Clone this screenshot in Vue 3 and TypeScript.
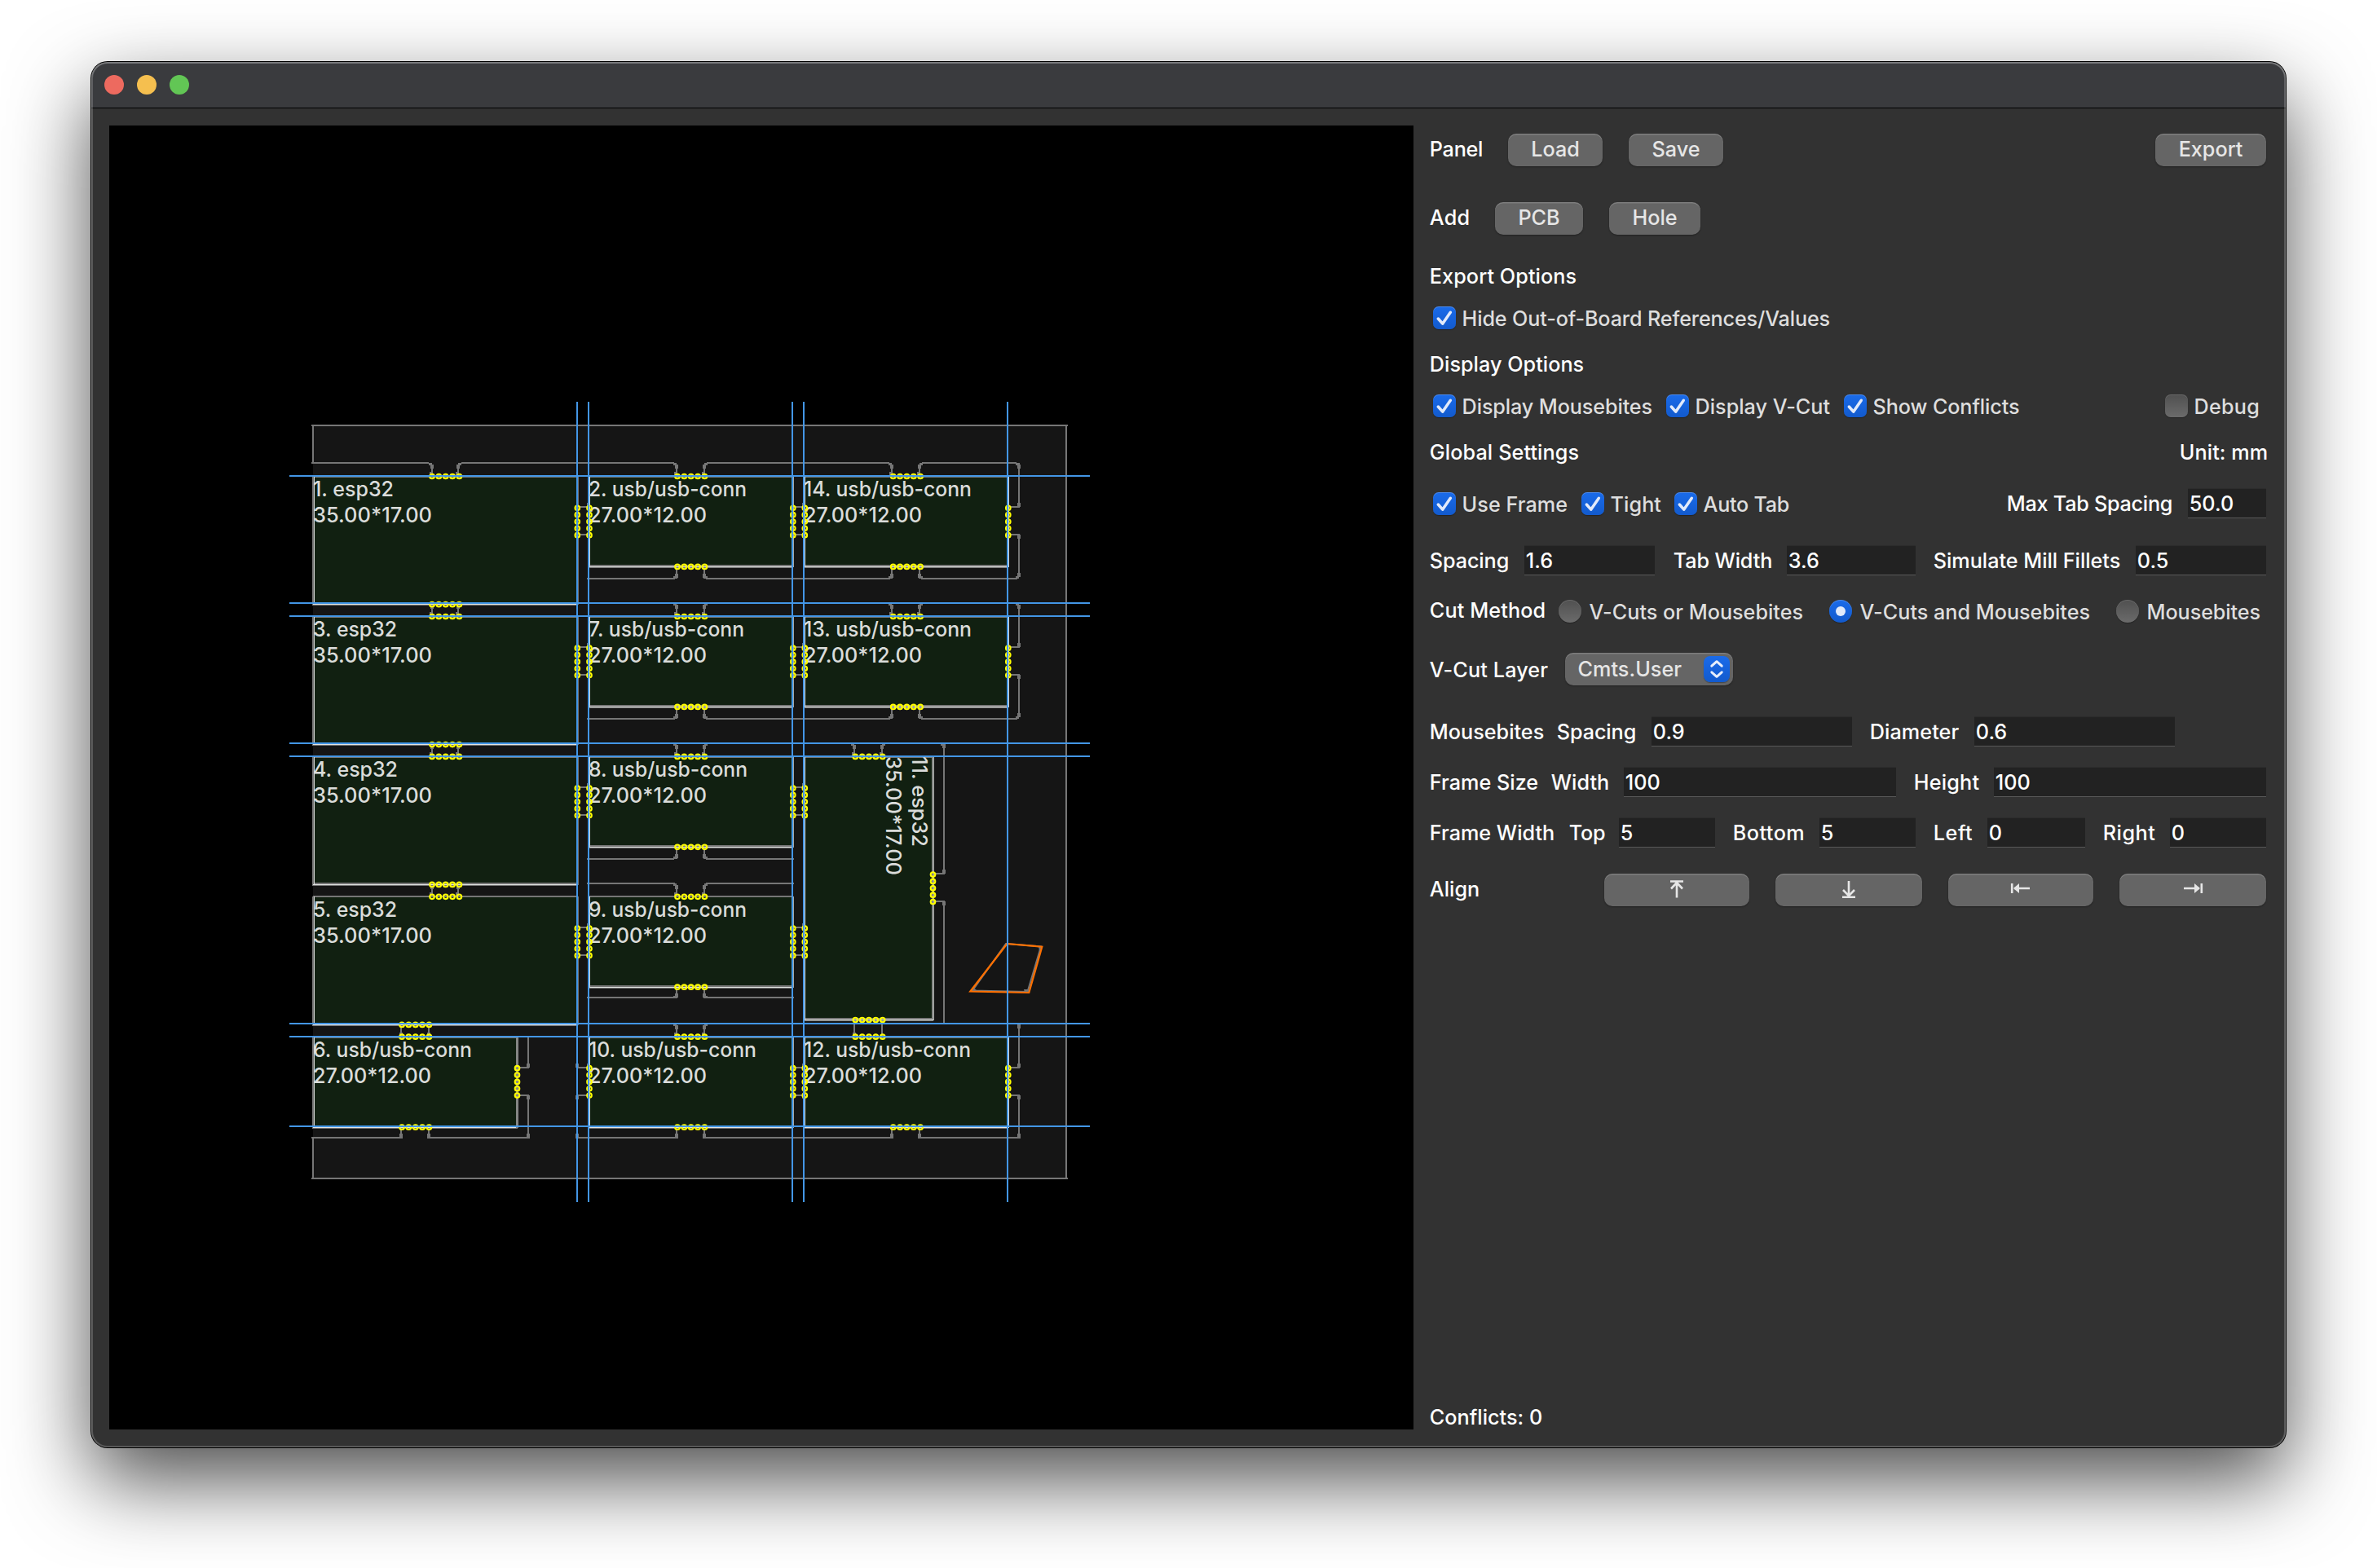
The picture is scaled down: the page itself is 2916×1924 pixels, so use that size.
<script setup lang="ts">
type Kind = 'label' | 'check' | 'radio' | 'field' | 'button' | 'select' | 'icon'

interface Item {
  kind: Kind
  x: number
  w: number
  text?: string
  on?: boolean
  icon?: 'top' | 'bottom' | 'left' | 'right'
}

interface Row {
  center: number
  cls?: string
  items: Item[]
}

const FONT = 25.2
const PANEL_X = 1734
const PANEL_Y = 154

const ctx = document.createElement('canvas').getContext('2d')!

// Letter spacing that makes a string occupy the wanted width.
function tracking(text: string, width: number, size = FONT): string {
  ctx.font = `450 ${size}px Inter`
  const natural = ctx.measureText(text).width
  return ((width + 1.4 - natural) / text.length).toFixed(3) + 'px'
}

const label = (text: string, x: number, w: number): Item => ({ kind: 'label', text, x, w })
const check = (text: string, x: number, w: number, on = true): Item => ({ kind: 'check', text, x, w, on })
const radio = (text: string, x: number, w: number, on = false): Item => ({ kind: 'radio', text, x, w, on })
const field = (text: string, x: number, w: number): Item => ({ kind: 'field', text, x, w })
const button = (text: string, x: number, w: number): Item => ({ kind: 'button', text, x, w })
const icon = (name: Item['icon'], x: number, w: number): Item => ({ kind: 'icon', icon: name, x, w })

const rows: Row[] = [
  { center: 184, cls: 'plain', items: [label('Panel', 1753, 64), button('Load', 1850, 116), button('Save', 1998, 116), button('Export', 2644, 136)] },
  { center: 268, cls: 'plain', items: [label('Add', 1753, 48), button('PCB', 1834, 108), button('Hole', 1974, 112)] },
  { center: 340, cls: 'plain', items: [label('Export Options', 1753, 179)] },
  { center: 390, items: [check('Hide Out-of-Board References/Values', 1758, 450)] },
  { center: 448, cls: 'plain', items: [label('Display Options', 1753, 188)] },
  { center: 498, items: [check('Display Mousebites', 1758, 232), check('Display V-Cut', 2044, 164), check('Show Conflicts', 2262, 178.5), check('Debug', 2656, 79, false)] },
  { center: 556, cls: 'plain', items: [label('Global Settings', 1753, 182), label('Unit: mm', 2673, 107)] },
  { center: 618, items: [check('Use Frame', 1758, 128), check('Tight', 1940, 61), check('Auto Tab', 2054, 104), label('Max Tab Spacing', 2461, 202), field('50.0', 2684, 96)] },
  { center: 688, items: [label('Spacing', 1753, 96), field('1.6', 1870, 160), label('Tab Width', 2052, 120), field('3.6', 2192, 158), label('Simulate Mill Fillets', 2371, 228), field('0.5', 2620, 160)] },
  { center: 750, cls: 'cut', items: [label('Cut Method', 1753, 141), radio('V-Cuts or Mousebites', 1912, 261), radio('V-Cuts and Mousebites', 2244, 281, true), radio('Mousebites', 2596, 138)] },
  { center: 821, cls: 'layer', items: [label('V-Cut Layer', 1753, 144), { kind: 'select', text: 'Cmts.User', x: 1920, w: 206 }] },
  { center: 898, items: [label('Mousebites', 1753, 139), label('Spacing', 1909, 96), field('0.9', 2026, 246), label('Diameter', 2293, 108), field('0.6', 2422, 246)] },
  { center: 960, items: [label('Frame Size', 1753, 132), label('Width', 1902, 70), field('100', 1992, 334), label('Height', 2347, 79), field('100', 2446, 334)] },
  { center: 1022, items: [label('Frame Width', 1753, 152), label('Top', 1924, 43), field('5', 1986, 118), label('Bottom', 2125, 87), field('5', 2232, 118), label('Left', 2371, 47), field('0', 2438, 120), label('Right', 2579, 63), field('0', 2662, 118)] },
  { center: 1092, cls: 'plain', items: [label('Align', 1753, 60), icon('top', 1968, 178), icon('bottom', 2178, 180), icon('left', 2390, 178), icon('right', 2600, 180)] },
  { center: 1740, cls: 'plain', items: [label('Conflicts: 0', 1753, 137)] },
]

// Full width an item occupies, controls with captions included.
function extent(it: Item): number {
  if (it.kind === 'label') return it.w + 3
  if (it.kind === 'check') return it.w + 38
  if (it.kind === 'radio') return it.w + 40
  return it.w
}

function rowGap(i: number): string {
  const top = rows[i].center - 20
  const prev = i ? rows[i - 1].center + 20 : PANEL_Y
  return top - prev + 'px'
}

function itemGap(row: Row, i: number): string {
  const prev = i ? row.items[i - 1].x + extent(row.items[i - 1]) : PANEL_X
  return row.items[i].x - prev + 'px'
}

const icons: Record<string, string> = {
  top: 'M-8-10.5H8M0-9V9.5M-7-1.5L0-9L7-1.5',
  bottom: 'M-8 8.7H8M0-11V7.5M-7 0L0 7.2L7 0',
  left: 'M-10.8-8V4M-8-2H11',
  right: 'M10.8-8V4M8-2H-11',
}
const heads: Record<string, string> = {
  left: 'M-9-2L-2-8V4Z',
  right: 'M9-2L2-8V4Z',
}

// ---- Board panel ----
interface Board {
  name: string
  nameW: number
  size: string
  sizeW: number
  x: number
  y: number
  w: number
  h: number
  right: 'dim' | 'mid' | 'bright' | 'wide'
}

const esp = (name: string, nameW: number, y: number, h = 157): Board =>
  ({ name, nameW, size: '35.00*17.00', sizeW: 145, x: 385, y, w: 324, h, right: 'dim' })
const usb = (name: string, nameW: number, x: number, y: number, right: Board['right'], h = 111): Board =>
  ({ name, nameW, size: '27.00*12.00', sizeW: 144, x, y, w: 250, h, right })

const boards: Board[] = [
  esp('1. esp32', 98, 585),
  esp('3. esp32', 102, 757),
  esp('4. esp32', 103, 929),
  esp('5. esp32', 102, 1100, 158),
  usb('6. usb/usb-conn', 194, 385, 1273, 'wide'),
  usb('2. usb/usb-conn', 193, 723, 585, 'mid'),
  usb('7. usb/usb-conn', 190, 723, 757, 'mid'),
  usb('8. usb/usb-conn', 194, 723, 929, 'mid'),
  usb('9. usb/usb-conn', 193, 723, 1100, 'mid', 112),
  usb('10. usb/usb-conn', 205, 723, 1273, 'mid'),
  usb('14. usb/usb-conn', 205, 987, 585, 'bright'),
  usb('13. usb/usb-conn', 205, 987, 757, 'bright'),
  usb('12. usb/usb-conn', 204, 987, 1273, 'bright'),
]
const turned = { x: 987, y: 929, w: 158, h: 323 }

const rightColor = { dim: '#6f706f', mid: '#a5a7a5', bright: '#d6d8d6', wide: '#858685' }

// Captions of the fourth row sit one pixel further from the board's edge.
const textTop = (b: Board) => (b.y === 1100 ? b.y + 1 : b.y)

const mill: string[] = []
const blobs: { x: number; y: number; w: number; h: number }[] = []
const blob = (x: number, y: number, w: number, h: number) => blobs.push({ x, y, w, h })

// Vertical side of a tab above a board; dir points away from the tab.
function upperSide(x: number, top: number, bottom: number, dir: -1 | 1) {
  mill.push(`M${x} ${top + 2}V${bottom}`)
  blob(x - 2, top + 2, 4, 5)
  blob(dir < 0 ? x - 4 : x, top, 4, 3)
  blob(x - 3, bottom - 4, 4, 4)
}
function lowerSide(x: number, top: number, bottom: number, dir: -1 | 1) {
  mill.push(`M${x} ${top}V${bottom}`)
  blob(x - 2, bottom - 6, 4, 5)
  blob(dir < 0 ? x - 4 : x, bottom - 3, 4, 3)
}

// Row 1 top edge
mill.push('M382 568H526', 'M566 568H827', 'M867 568H1091', 'M1131 568H1247')
for (const [x, d] of [[530, -1], [562, 1], [830, -1], [864, 1], [1094, -1], [1128, 1]] as [number, -1 | 1][]) {
  upperSide(x, 568, 583, d)
}
mill.push('M1250 568V572')
// Gaps between stacked boards
for (const y of [740, 912, 1084]) {
  upperSide(530, y, y + 15, -1)
  upperSide(562, y, y + 15, 1)
  upperSide(830, y, y + 15, -1)
  upperSide(864, y, y + 15, 1)
}
upperSide(1094, 740, 755, -1)
upperSide(1128, 740, 755, 1)
upperSide(1048, 912, 927, -1)
upperSide(1082, 912, 927, 1)
upperSide(830, 1256, 1271, -1)
upperSide(864, 1256, 1271, 1)
mill.push('M492 1256V1271', 'M526 1256V1271', 'M1048 1252V1271', 'M1082 1252V1271')
blob(490, 1267, 4, 5)
blob(524, 1267, 4, 5)
blob(1046, 1267, 4, 5)

// Lower edges of the small boards
for (const y of [710, 882]) {
  mill.push(`M720 ${y}H828`, `M866 ${y}H1092`, `M1130 ${y}H1248`)
  lowerSide(830, y - 13, y, -1)
  lowerSide(864, y - 13, y, 1)
  lowerSide(1094, y - 13, y, -1)
  lowerSide(1128, y - 13, y, 1)
  // right-hand column
  mill.push(`M1250 ${y - 140}V${y - 88}H1239`, `M1239 ${y - 54}H1250V${y - 2}`)
  blob(1248, y - 140, 4, 5)
  blob(1246, y - 142, 4, 3)
  blob(1248, y - 93, 4, 5)
  blob(1248, y - 54, 4, 5)
  blob(1248, y - 7, 4, 5)
  blob(1246, y - 3, 4, 3)
}
mill.push('M720 1054H827', 'M866 1054H974', 'M720 1084H828', 'M866 1084H974', 'M720 1224H828', 'M866 1224H974')
lowerSide(830, 1041, 1054, -1)
lowerSide(864, 1041, 1054, 1)
lowerSide(830, 1212, 1225, -1)
lowerSide(864, 1212, 1225, 1)
mill.push('M382 1396H492', 'M526 1396H648', 'M708 1396H830', 'M864 1396H1094', 'M1128 1396H1250')
for (const x of [492, 526, 830, 864, 1094, 1128]) {
  mill.push(`M${x} 1384V1396`)
  blob(x - 2, 1391, 4, 6)
}
mill.push('M648 1272V1310H636', 'M636 1344H648V1396', 'M1250 1258V1310H1239', 'M1239 1344H1250V1396', 'M708 1310H722', 'M708 1344H722')
for (const x of [648, 1250]) {
  blob(x - 2, 1305, 4, 5)
  blob(x - 2, 1344, 4, 5)
  blob(x - 2, 1391, 4, 6)
}
blob(1248, 1257, 4, 5)
blob(706, 1305, 4, 5)
blob(706, 1344, 4, 5)
blob(706, 1391, 4, 6)
// Rotated board's slot
mill.push('M1158 913V1072H1146', 'M1146 1106H1158V1256')
blob(1156, 913, 4, 5)
blob(1154, 912, 4, 3)
blob(1156, 1067, 4, 5)
blob(1156, 1106, 4, 5)
// Bridges between columns
for (const y of [622, 794, 966, 1138]) {
  mill.push(`M708 ${y}H723`, `M708 ${y + 34}H723`, `M972 ${y}H987`, `M972 ${y + 34}H987`)
}
mill.push('M972 1310H987', 'M972 1344H987')
// Small overshoots at each side tab
for (const y of [622, 794, 966, 1138, 1310]) {
  for (const x of [708, 722, 972, 986]) {
    if (y === 1310 && x === 708) continue
    blob(x - 2, y - 5, 4, 4)
    blob(x - 2, y + 35, 4, 3)
  }
  if (y < 800 || y === 1310) {
    blob(1234, y - 5, 4, 4)
    blob(1234, y + 35, 4, 3)
  }
}

const vcutsX = [708, 722, 972, 986, 1236]
const vcutsY = [584, 740, 756, 912, 928, 1256, 1272, 1382]

interface Dot { x: number; y: number }
const bites: Dot[] = []
const PITCH = 8.35
const across = (x: number, y: number) => { for (let i = 0; i < 5; i++) bites.push({ x: x + i * PITCH, y }) }
const down = (x: number, y: number) => { for (let i = 0; i < 5; i++) bites.push({ x, y: y + i * PITCH }) }

for (const y of [584.5, 741.7, 756.5, 913.6, 928.4, 1085.4, 1100.3]) across(530, y)
for (const y of [1257.4, 1272.2, 1383.2]) across(493, y)
for (const y of [584.5, 695.4, 756.5, 867.4, 928.4, 1039.3, 1100.3, 1211.2, 1272.2, 1383.2]) across(831, y)
for (const y of [584.5, 695.4, 756.5, 867.4, 1383.2]) across(1095.7, y)
for (const y of [928.4, 1251.5, 1272.2]) across(1049.3, y)
for (const y of [623.3, 795.2, 967.1, 1139]) down(708.3, y)
for (const y of [623.3, 795.2, 967.1, 1139, 1310.7]) { down(723, y); down(972.8, y); down(987.3, y) }
for (const y of [623.3, 795.2, 1310.7]) down(1236.8, y)
down(634.5, 1310.7)
down(1144.5, 1073.1)
</script>

<template>
  <div class="desktop">
    <div class="window">
      <header class="titlebar">
        <i class="light close"></i>
        <i class="light minimize"></i>
        <i class="light expand"></i>
      </header>
      <div class="content">
        <svg class="canvas" viewBox="134 154 1600 1600" width="1600" height="1600">
          <rect x="134" y="154" width="1600" height="1600" fill="#000" />
          <rect x="384" y="522" width="924" height="924" fill="#151515" />
          <g stroke="#767676" stroke-width="2" fill="none">
            <path d="M382 522H1310M384 522V568M1308 522V1446M382 1446H1310M384 1396V1446" />
            <path v-for="(d, i) in mill" :key="i" :d="d" />
          </g>
          <rect v-for="(b, i) in blobs" :key="'b' + i" :x="b.x" :y="b.y" :width="b.w" :height="b.h" fill="#767676" />

          <g v-for="b in boards" :key="b.name">
            <rect :x="b.x" :y="b.y" :width="b.w" :height="b.h" fill="#112011" />
            <rect :x="b.x - 1" :y="b.y - 1" :width="b.w + 1" height="2" fill="#767676" />
            <rect :x="b.x - 2" :y="b.y" width="2" :height="b.h" fill="#767676" />
            <rect :x="b.x - 2" :y="b.y + b.h - 3" :width="b.w + 2" height="4" fill="#767676" />
            <rect :x="b.x" :y="b.y" width="1" :height="b.h" fill="#d6d8d6" />
            <rect :x="b.x - 1" :y="b.y + b.h - 1" :width="b.w + 1" height="1" fill="#e2e4e2" />
            <rect :x="b.x + b.w - (b.right === 'wide' ? 2 : 0)" :y="b.y" :width="b.right === 'wide' ? 3 : 1" :height="b.h" :fill="rightColor[b.right]" />
          </g>
          <g>
            <rect :x="turned.x" :y="turned.y" :width="turned.w" :height="turned.h" fill="#112011" />
            <rect x="986" y="928" width="159" height="2" fill="#767676" />
            <rect x="985" y="1249" width="160" height="4" fill="#767676" />
            <rect x="1143" y="929" width="3" height="323" fill="#858685" />
            <rect x="1145" y="929" width="1" height="323" fill="#a8aaa8" />
            <rect x="987" y="929" width="1" height="323" fill="#d6d8d6" />
            <rect x="986" y="1251" width="159" height="1" fill="#e2e4e2" />
          </g>

          <g class="caption">
            <template v-for="b in boards" :key="'t' + b.name">
              <text :x="b.x - 1" :y="textTop(b) + 24" :textLength="b.nameW + 1" lengthAdjust="spacingAndGlyphs">{{ b.name }}</text>
              <text :x="b.x - 1" :y="textTop(b) + 56" :textLength="b.sizeW + 1" lengthAdjust="spacingAndGlyphs">{{ b.size }}</text>
            </template>
            <text transform="translate(1118.5 928) rotate(90)" textLength="111" lengthAdjust="spacingAndGlyphs">11. esp32</text>
            <text transform="translate(1086.5 928) rotate(90)" textLength="146" lengthAdjust="spacingAndGlyphs">35.00*17.00</text>
          </g>

          <g fill="none" stroke="#ffff00" stroke-width="2.1">
            <circle v-for="(c, i) in bites" :key="'c' + i" :cx="c.x" :cy="c.y" r="2.8" />
          </g>

          <path d="M1234 1158L1277 1161.500L1260.500 1217L1193 1215.500Z" fill="none" stroke="#767676" stroke-width="2" />
          <path d="M1274 1161H1278V1167H1275ZM1256 1214H1262V1218H1257ZM1193 1211L1198 1215H1192Z" fill="#767676" />
          <path d="M1235.500 1158L1278.300 1161.700L1262.300 1218L1190.300 1216.500Z" fill="none" stroke="#ff7000" stroke-width="2.2" />

          <g fill="#4396e6">
            <rect v-for="x in vcutsX" :key="'x' + x" :x="x - 1" y="493" width="2" height="982" />
            <rect v-for="y in vcutsY" :key="'y' + y" x="355" :y="y - 1" width="982" height="2" />
          </g>
        </svg>

        <section class="panel">
          <div v-for="(row, r) in rows" :key="r" class="row" :class="row.cls" :style="{ marginTop: rowGap(r) }">
            <div
              v-for="(it, i) in row.items"
              :key="i"
              class="item"
              :class="it.kind"
              :style="{ marginLeft: itemGap(row, i), width: extent(it) + 'px' }"
            >
              <template v-if="it.kind === 'label'">
                <span :style="{ letterSpacing: tracking(it.text!, it.w) }">{{ it.text }}</span>
              </template>
              <template v-else-if="it.kind === 'check'">
                <i class="box" :class="{ on: it.on }">
                  <svg v-if="it.on" viewBox="0 0 28 28" width="28" height="28">
                    <path d="M6.300 15L11.700 21.200L21.300 7.300" fill="none" stroke="#e1eafb" stroke-width="3.500" stroke-linecap="round" stroke-linejoin="round" />
                  </svg>
                </i>
                <span :style="{ letterSpacing: tracking(it.text!, it.w) }">{{ it.text }}</span>
              </template>
              <template v-else-if="it.kind === 'radio'">
                <i class="dot" :class="{ on: it.on }"></i>
                <span :style="{ letterSpacing: tracking(it.text!, it.w) }">{{ it.text }}</span>
              </template>
              <template v-else-if="it.kind === 'select'">
                <span :style="{ letterSpacing: tracking(it.text!, 126) }">{{ it.text }}</span>
                <i class="stepper">
                  <svg viewBox="0 0 32 32" width="32" height="32">
                    <path d="M9.800 12.200L16 6.700L22.200 12.200M9.800 19.800L16 25.300L22.200 19.800" fill="none" stroke="#e6eefc" stroke-width="3" stroke-linecap="round" stroke-linejoin="round" />
                  </svg>
                </i>
              </template>
              <template v-else-if="it.kind === 'icon'">
                <svg viewBox="-16 -16 32 32" width="32" height="32">
                  <path :d="icons[it.icon!]" fill="none" stroke="#e6e6e6" stroke-width="2.600" />
                  <path v-if="heads[it.icon!]" :d="heads[it.icon!]" fill="#e6e6e6" />
                </svg>
              </template>
              <span v-else>{{ it.text }}</span>
            </div>
          </div>
        </section>
      </div>
    </div>
  </div>
</template>

<style>
body {
  background: #fff;
}
</style>

<style scoped>
.desktop {
  box-sizing: border-box;
  width: 2916px;
  height: 1924px;
  padding: 76px 112px 0;
  background: #fff;
  overflow: hidden;
  font-family: Inter, "Liberation Sans", sans-serif;
  font-size: 25.2px;
  font-weight: 450;
  line-height: 32px;
}

.window {
  position: relative;
  width: 2692px;
  height: 1700px;
  border-radius: 20px;
  background: #323232;
  box-shadow: 0 0 0 1px #000, 0 40px 100px rgba(0, 0, 0, 0.7);
}

.window::after {
  content: "";
  position: absolute;
  inset: 0;
  border-radius: 20px;
  box-shadow: inset 0 0 0 2px rgba(255, 255, 255, 0.19), inset 0 1px 0 1px rgba(255, 255, 255, 0.16);
  pointer-events: none;
}

.titlebar {
  display: flex;
  align-items: center;
  gap: 16px;
  box-sizing: border-box;
  height: 57px;
  padding-left: 16px;
  border-bottom: 1px solid #000;
  border-radius: 20px 20px 0 0;
  background: #3a3b3e;
}

.light {
  width: 24px;
  height: 24px;
  border-radius: 50%;
}

.close { background: #ed6a5f; }
.minimize { background: #f5bf4f; }
.expand { background: #62c655; }

.content {
  display: flex;
  padding: 21px 0 0 22px;
}

.canvas {
  display: block;
  flex: none;
}

.caption {
  fill: #dadcda;
  font-size: 25.4px;
  font-feature-settings: "calt" 0;
}

.panel {
  width: 1070px;
}

.row {
  display: flex;
  align-items: center;
  height: 40px;
}

.item {
  display: flex;
  flex: none;
  align-items: center;
  box-sizing: border-box;
  white-space: pre;
}

.label { color: #fff; }
.label span { margin-left: 0.8px; }
.plain .label span,
.cut .label span { margin-bottom: 2px; }
.layer .label span { margin-top: 1px; }

.check,
.radio { color: #dedede; }
.check span { margin: 1px 0 0 7.6px; }
.radio span { margin: 1px 0 0 9.6px; }

.box,
.dot {
  flex: none;
  width: 28px;
  height: 28px;
  background: linear-gradient(#505050, #6b6b6b);
  box-shadow: inset 0 1px 0 rgba(255, 255, 255, 0.14), 0 1px 1px rgba(0, 0, 0, 0.3);
}

.box { border-radius: 7px; }
.dot {
  display: flex;
  align-items: center;
  justify-content: center;
  border-radius: 50%;
}

.box.on,
.dot.on {
  background: linear-gradient(#1a6bea, #125acd);
  box-shadow: inset 0 1px 0 rgba(255, 255, 255, 0.22), 0 1px 1px rgba(0, 0, 0, 0.3);
}

.box svg,
.stepper svg { display: block; }

.dot.on::after {
  content: "";
  width: 12px;
  height: 12px;
  border-radius: 50%;
  background: #e1eafb;
}

.button,
.icon,
.select {
  height: 40px;
  border-radius: 10px;
  background: #656565;
  box-shadow: inset 0 1.5px 0 rgba(255, 255, 255, 0.16), 0 1px 2px rgba(0, 0, 0, 0.35);
  color: #e6e6e6;
}

.button,
.icon { justify-content: center; }
.button span { margin-bottom: 2px; }

.select {
  justify-content: space-between;
  padding: 0 4px 0 15.6px;
}

.stepper {
  width: 32px;
  height: 32px;
  border-radius: 8px;
  background: linear-gradient(#1a6bea, #125acd);
  box-shadow: 0 1px 1px rgba(0, 0, 0, 0.3);
}

.field {
  height: 37px;
  margin-bottom: 1px;
  padding-left: 1.8px;
  border-top: 1px solid #2c2c2c;
  border-bottom: 1px solid #585858;
  background: #222;
  color: #fff;
}
</style>
